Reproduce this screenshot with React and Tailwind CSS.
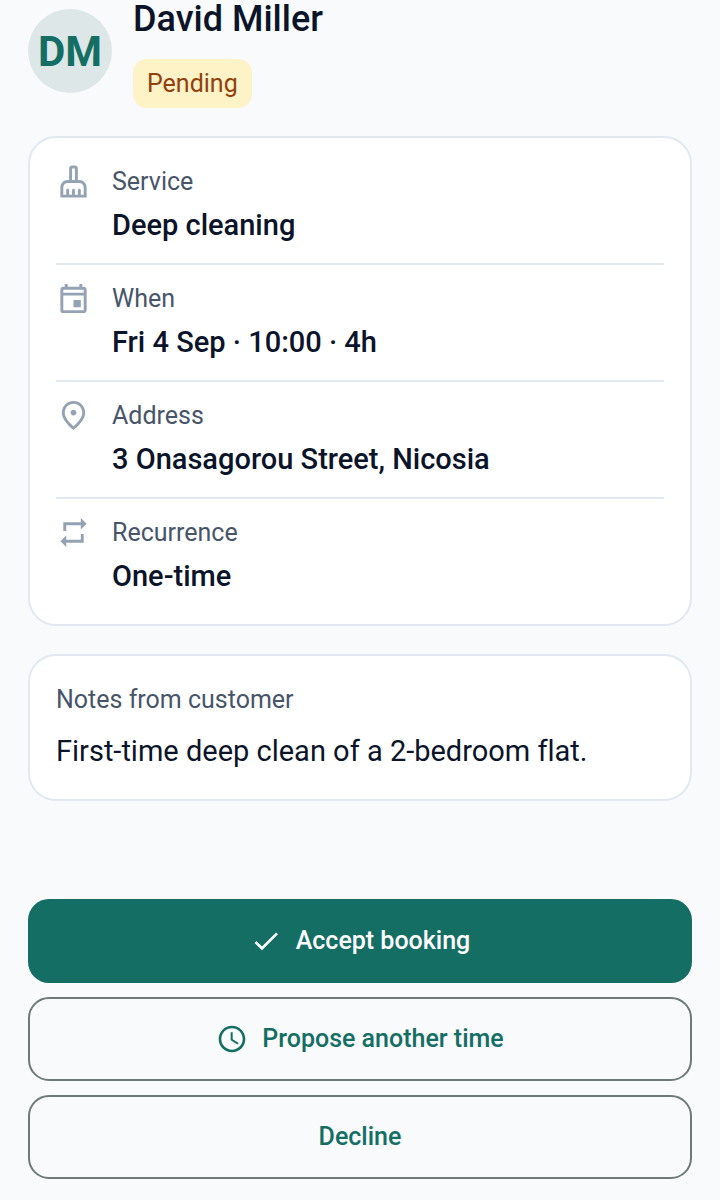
import React from 'react';
import {
  MdCheck,
  MdOutlineCleaningServices,
  MdOutlineEvent,
  MdOutlineFmdGood,
  MdRepeat,
  MdSchedule
} from 'react-icons/md';

const details = [
  { label: 'Service', value: 'Deep cleaning', icon: MdOutlineCleaningServices },
  { label: 'When', value: 'Fri 4 Sep · 10:00 · 4h', icon: MdOutlineEvent },
  { label: 'Address', value: '3 Onasagorou Street, Nicosia', icon: MdOutlineFmdGood },
  { label: 'Recurrence', value: 'One-time', icon: MdRepeat }
];

const DetailRow = ({ label, value, icon: Icon }) => {
  return (
    <div className="flex items-start gap-[21px] py-4 border-b-2 border-[#e2e8f0] last:border-b-0">
      <Icon className="size-[35px] shrink-0 text-[#94a3b3]" />
      <div>
        <dt className="text-[25px] leading-9 text-[#475569]">{label}</dt>
        <dd className="mt-1 text-[29px] leading-[43px] font-medium">{value}</dd>
      </div>
    </div>
  );
};

const App = () => {
  return (
    <div className="min-h-screen flex flex-col bg-[#f8fafc] text-[#0b1429] font-['Roboto',sans-serif] [font-variant-ligatures:none]">
      <main className="flex-1 flex flex-col gap-7 px-7">
        {/* Customer */}
        <header className="flex items-start gap-[21px]">
          <div className="mt-[9px] size-[84px] shrink-0 rounded-full bg-[#dde7e7] flex items-center justify-center text-[42px] font-bold text-[#146e64]">
            DM
          </div>
          <div className="flex flex-col items-start gap-5">
            <h1 className="text-[36px] leading-[39px] font-medium">David Miller</h1>
            <span className="px-[14px] py-[7px] rounded-[14px] bg-[#fef3c7] text-[25px] leading-[35px] text-[#92400e]">
              Pending
            </span>
          </div>
        </header>

        {/* Booking details */}
        <dl className="px-[26px] py-[10px] rounded-[28px] border-2 border-[#e2e8f0] bg-white">
          {details.map((item) => (
            <DetailRow key={item.label} {...item} />
          ))}
        </dl>

        {/* Notes */}
        <section className="p-[26px] rounded-[28px] border-2 border-[#e2e8f0] bg-white">
          <h2 className="text-[25px] leading-9 text-[#475569]">Notes from customer</h2>
          <p className="mt-3 text-[29px] leading-[43px]">First-time deep clean of a 2-bedroom flat.</p>
        </section>
      </main>

      {/* Actions */}
      <footer className="flex flex-col gap-[14px] px-7 pt-7 pb-[21px]">
        <button
          type="button"
          className="h-[84px] flex items-center justify-center gap-[14px] rounded-[21px] bg-[#146e64] text-[25px] font-medium text-white"
        >
          <MdCheck className="size-8" />
          Accept booking
        </button>
        <button
          type="button"
          className="h-[84px] flex items-center justify-center gap-[14px] rounded-[21px] border-2 border-[#6f7977] text-[25px] font-medium text-[#146e64]"
        >
          <MdSchedule className="size-8" />
          Propose another time
        </button>
        <button
          type="button"
          className="h-[84px] flex items-center justify-center rounded-[21px] border-2 border-[#6f7977] text-[25px] font-medium text-[#146e64]"
        >
          Decline
        </button>
      </footer>
    </div>
  );
};

export default App;
